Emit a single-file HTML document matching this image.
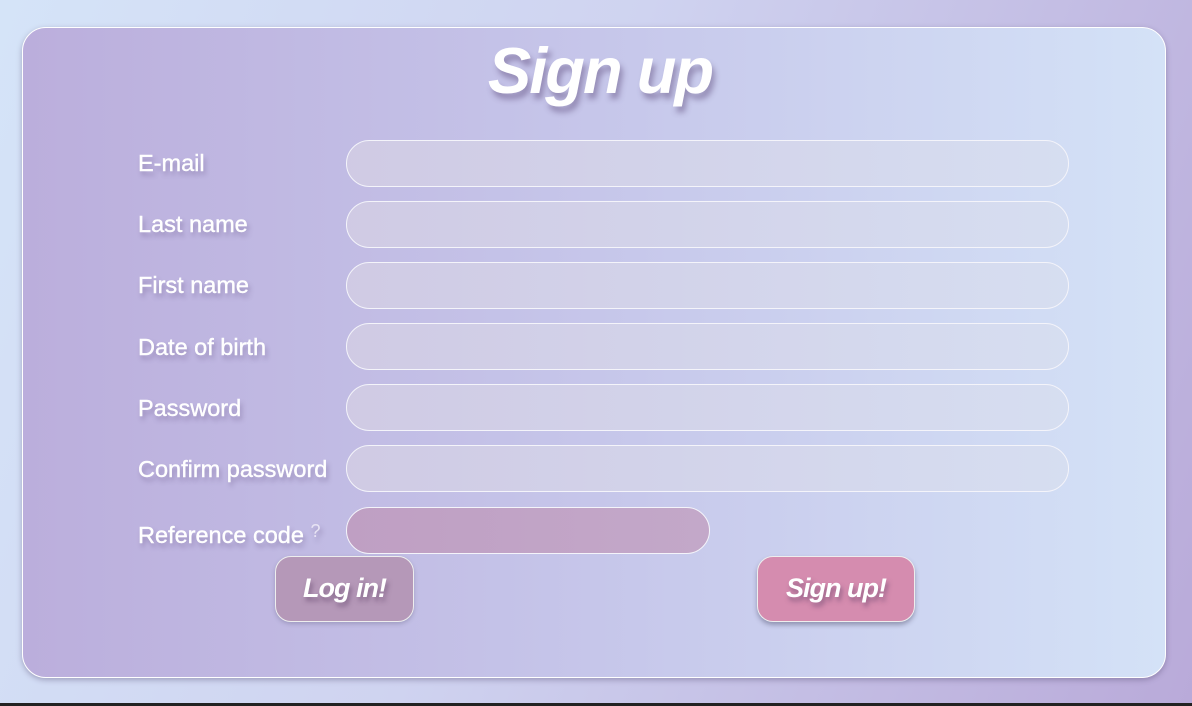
<!DOCTYPE html>
<html><head><style>
html,body{margin:0;width:1192px;height:706px;overflow:hidden}
body{background:linear-gradient(110deg,#d5e4f8 0%,#cfd3f0 45%,#b9aad9 100%);font-family:"Liberation Sans",sans-serif;position:relative}
.bar{position:absolute;left:0;top:703px;width:1192px;height:3px;background:#222}
.card{position:absolute;left:22px;top:27px;width:1142px;height:649px;border:1px solid #fff;border-radius:24px;background:linear-gradient(90deg,#bbaedc 0%,#c6c6ea 50%,#d4e2f7 100%);box-shadow:0 2px 6px rgba(80,70,110,.4)}
h1{position:absolute;left:4px;width:1192px;top:33px;margin:0;text-align:center;color:#fff;font-size:65px;font-style:italic;font-weight:bold;text-shadow:3px 6px 6px rgba(90,70,120,.45);letter-spacing:-2px}
.l{position:absolute;left:138px;color:#fff;font-size:23.5px;text-shadow:2px 4px 5px rgba(90,70,120,.4);-webkit-text-stroke:0.4px #fff}
.i{position:absolute;left:346px;width:721px;height:45px;border:1px solid #f4f4fa;border-radius:24px;background:linear-gradient(90deg,rgba(210,205,228,.85),rgba(215,222,240,.85))}
.btn{position:absolute;top:556px;height:64px;border:1px solid #eee;border-radius:16px;color:#fff;font-size:27px;font-style:italic;font-weight:bold;text-align:center;line-height:62px;text-shadow:2px 4px 5px rgba(90,60,100,.5);box-shadow:0 3px 5px rgba(60,60,90,.4);letter-spacing:-1px}
</style></head><body>
<div class="card"></div>
<h1>Sign up</h1>
<div class="l" style="top:150px">E-mail</div>
<div class="l" style="top:211px">Last name</div>
<div class="l" style="top:272px">First name</div>
<div class="l" style="top:334px">Date of birth</div>
<div class="l" style="top:395px">Password</div>
<div class="l" style="top:456px">Confirm password</div>
<div class="l" style="top:521px">Reference code <span style="font-size:18px;vertical-align:6px;color:#e8e4f4;-webkit-text-stroke:0">?</span></div>
<div class="i" style="top:140px"></div>
<div class="i" style="top:201px"></div>
<div class="i" style="top:262px"></div>
<div class="i" style="top:323px"></div>
<div class="i" style="top:384px"></div>
<div class="i" style="top:445px"></div>
<div class="i" style="top:507px;width:362px;background:linear-gradient(90deg,#bf9fc3,#c3a8c9)"></div>
<div class="btn" style="left:275px;width:137px;background:#b598b8;box-shadow:0 2px 4px rgba(60,60,90,.25)">Log in!</div>
<div class="btn" style="left:757px;width:156px;background:#d58caf">Sign up!</div>
<div class="bar"></div>
</body></html>
